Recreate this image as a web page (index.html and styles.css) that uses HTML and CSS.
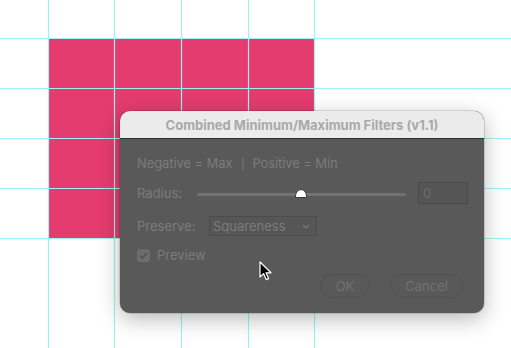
FILE: index.html
```html
<!DOCTYPE html>
<html>
<head>
<meta charset="utf-8">
<link rel="stylesheet" href="styles.css">
</head>
<body>
<div class="stage">
  <svg class="canvas" width="511" height="348" viewBox="0 0 511 348">
    <rect x="48" y="38" width="266" height="200" fill="#e43c6f"/>
    <g stroke="#a2f1f4" stroke-width="1.2">
      <line x1="48.5" y1="0" x2="48.5" y2="348"/>
      <line x1="114.5" y1="0" x2="114.5" y2="348"/>
      <line x1="181.5" y1="0" x2="181.5" y2="348"/>
      <line x1="248.5" y1="0" x2="248.5" y2="348"/>
      <line x1="314.5" y1="0" x2="314.5" y2="348"/>
      <line x1="0" y1="38.5" x2="511" y2="38.5"/>
      <line x1="0" y1="88.5" x2="511" y2="88.5"/>
      <line x1="0" y1="138.5" x2="511" y2="138.5"/>
      <line x1="0" y1="188.5" x2="511" y2="188.5"/>
      <line x1="0" y1="238.5" x2="511" y2="238.5"/>
    </g>
  </svg>

  <div class="dialog">
    <div class="titlebar">Combined Minimum/Maximum Filters (v1.1)</div>
    <div class="content">
      <div class="row info">Negative = Max<span class="pipe">|</span>Positive = Min</div>
      <div class="row radius">
        <span class="label radius-label">Radius:</span>
        <div class="slider">
          <div class="track"></div>
          <svg class="thumb" width="12" height="9" viewBox="0 0 12 9">
            <path d="M0.5 8.5 L0.5 7 Q1 1 6 0.5 Q11 1 11.5 7 L11.5 8.5 Z" fill="#ffffff" stroke="#3a3a3a" stroke-width="1"/>
          </svg>
        </div>
        <div class="numbox">0</div>
      </div>
      <div class="row preserve">
        <span class="label preserve-label">Preserve:</span>
        <div class="select">
          <span>Squareness</span>
          <svg class="chev" width="8" height="5" viewBox="0 0 8 5">
            <path d="M1 1 L4 4 L7 1" fill="none" stroke="#7d7d7d" stroke-width="1.2"/>
          </svg>
        </div>
      </div>
      <div class="row preview">
        <span class="check">
          <svg width="13" height="13" viewBox="0 0 13 13">
            <path d="M3 6.8 L5.4 9.2 L10 3.8" fill="none" stroke="#565656" stroke-width="1.8"/>
          </svg>
        </span>
        <span class="label">Preview</span>
      </div>
      <div class="row buttons">
        <div class="btn ok">OK</div>
        <div class="btn cancel">Cancel</div>
      </div>
    </div>
  </div>

  <svg class="cursor" width="14" height="21" viewBox="0 0 14 21">
    <path d="M1 1 L1 16 L4.6 12.6 L7.2 18.6 L9.6 17.6 L7 11.8 L12 11.8 Z" fill="#000" stroke="#fff" stroke-width="1.2" stroke-linejoin="round"/>
  </svg>
</div>
</body>
</html>
```
FILE: styles.css
```css
html, body {
  margin: 0;
  padding: 0;
  background: #ffffff;
}
.stage {
  position: relative;
  width: 511px;
  height: 348px;
  overflow: hidden;
  font-family: "Inter", "Liberation Sans", sans-serif;
}
.canvas {
  position: absolute;
  left: 0;
  top: 0;
}
.dialog {
  position: absolute;
  left: 120px;
  top: 111px;
  width: 364px;
  border-radius: 10px;
  overflow: hidden;
  background: #595959;
  box-shadow: 0 6px 22px rgba(0, 0, 0, 0.28), 0 0 0 0.5px rgba(0, 0, 0, 0.25);
}
.titlebar {
  height: 27px;
  border-bottom: 1px solid #2e2e2e;
  background: #ebebeb;
  color: #a9a9a9;
  font-weight: 700;
  font-size: 13px;
  display: flex;
  align-items: center;
  justify-content: center;
}
.content {
  display: flex;
  flex-direction: column;
  padding: 0 16px 15px 17px;
  color: #7b7b7b;
  font-size: 13px;
}
.row {
  display: flex;
  align-items: center;
}
.info {
  height: 20px;
  margin-top: 14px;
  letter-spacing: -0.1px;
}
.pipe {
  font-family: "Liberation Sans", sans-serif;
  font-size: 12px;
  margin: 0 8px 0 9px;
}
.radius {
  height: 22px;
  margin-top: 9px;
}
.label {
  flex: none;
}
.radius-label {
  width: 60px;
}
.slider {
  position: relative;
  width: 209px;
  height: 22px;
  display: flex;
  align-items: center;
  flex: none;
}
.track {
  width: 100%;
  height: 3px;
  margin-top: 2px;
  border-radius: 2px;
  background: #727272;
}
.thumb {
  position: absolute;
  left: 98px;
  top: 7px;
}
.numbox {
  margin-left: 12px;
  height: 20px;
  border: 1px solid #4a4a4a;
  background: #555555;
  color: #6c6c6c;
  display: flex;
  align-items: center;
  padding-left: 4px;
  width: 44px;
  flex: none;
}
.preserve {
  height: 20px;
  margin-top: 12px;
}
.preserve-label {
  width: 72px;
}
.select {
  height: 18px;
  border: 1px solid #4c4c4c;
  background: #565656;
  display: flex;
  align-items: center;
  justify-content: space-between;
  padding: 0 6px 0 3px;
  width: 97px;
}
.chev {
  margin-top: 1px;
}
.preview {
  height: 18px;
  margin-top: 10px;
}
.check {
  width: 13px;
  height: 13px;
  border-radius: 3px;
  background: #6d6d6d;
  margin-right: 7px;
  display: flex;
}
.buttons {
  height: 24px;
  margin-top: 10px;
  margin-right: 5px;
  justify-content: flex-end;
}
.btn {
  height: 22px;
  border: 1px solid #525252;
  border-radius: 12px;
  display: flex;
  align-items: center;
  justify-content: center;
  color: #727272;
}
.ok {
  width: 48px;
}
.cancel {
  width: 71px;
  margin-left: 20px;
}
.cursor {
  position: absolute;
  left: 259px;
  top: 261px;
}
```
